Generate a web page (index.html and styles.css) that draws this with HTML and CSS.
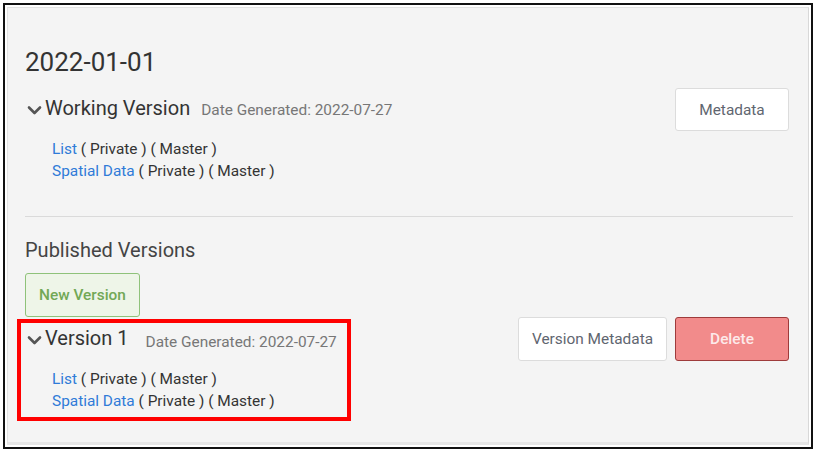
FILE: index.html
```html
<!DOCTYPE html>
<html>
<head>
<meta charset="utf-8">
<link rel="stylesheet" href="styles.css">
</head>
<body>
<div class="frame">
  <div class="panel">
    <h2 class="date-title">2022-01-01</h2>

    <div class="version version-working">
      <div class="version-main">
        <div class="version-head">
          <svg class="chev" width="15" height="10" viewBox="0 0 15 10"><path d="M2 2.5 L7.5 8 L13 2.5" fill="none" stroke="#555" stroke-width="2.6" stroke-linecap="round" stroke-linejoin="round"/></svg>
          <span class="version-name">Working Version</span>
          <span class="gen-date">Date Generated: 2022-07-27</span>
        </div>
        <ul class="files">
          <li><a class="file-link">List</a> ( Private ) ( Master )</li>
          <li><a class="file-link">Spatial Data</a> ( Private ) ( Master )</li>
        </ul>
      </div>
      <div class="actions">
        <button class="btn btn-default">Metadata</button>
      </div>
    </div>

    <hr class="divider">

    <h3 class="section-title">Published Versions</h3>
    <button class="btn btn-new">New Version</button>

    <div class="version version-published">
      <div class="version-main">
        <div class="version-head">
          <svg class="chev" width="15" height="10" viewBox="0 0 15 10"><path d="M2 2.5 L7.5 8 L13 2.5" fill="none" stroke="#555" stroke-width="2.6" stroke-linecap="round" stroke-linejoin="round"/></svg>
          <span class="version-name">Version 1</span>
          <span class="gen-date gen-date-wide">Date Generated: 2022-07-27</span>
        </div>
        <ul class="files">
          <li><a class="file-link">List</a> ( Private ) ( Master )</li>
          <li><a class="file-link">Spatial Data</a> ( Private ) ( Master )</li>
        </ul>
      </div>
      <div class="actions">
        <button class="btn btn-default btn-wide">Version Metadata</button>
        <button class="btn btn-danger">Delete</button>
      </div>
      <div class="highlight"></div>
    </div>
  </div>
</div>
</body>
</html>
```

FILE: styles.css
```css
html, body {
  margin: 0;
  padding: 0;
  background: #ffffff;
}

body {
  font-family: Roboto, "Liberation Sans", Arial, sans-serif;
  color: #333333;
}

.frame {
  margin: 3px 0 0 3px;
  width: 802px;
  height: 438px;
  border: 2px solid #111111;
  padding: 2px;
  box-sizing: content-box;
}

.panel {
  height: 100%;
  box-sizing: border-box;
  background: #f4f4f4;
  border: 1px solid #e3e3e3;
  border-right-color: #d8d8d8;
  border-bottom: 3px solid #e6e6e6;
  padding: 38px 15px 0 17px;
}

.date-title {
  margin: 0;
  font-size: 26px;
  line-height: 32px;
  font-weight: 400;
  color: #333333;
}

.version {
  position: relative;
  display: flex;
  justify-content: space-between;
  align-items: flex-start;
}

.version-working {
  margin-top: 10px;
}

.version-head {
  display: flex;
  align-items: baseline;
  padding-top: 6px;
  line-height: 28px;
}

.version-published .version-head {
  padding-top: 7px;
}

.chev {
  align-self: center;
  margin: 2px 3px 0 2px;
}

.version-name {
  font-size: 20px;
  color: #333333;
}

.gen-date {
  margin-left: 11px;
  font-size: 15.4px;
  color: #777777;
}

.gen-date-wide {
  margin-left: 17px;
  position: relative;
  top: 2px;
}

.files {
  list-style: none;
  margin: 14px 0 0 27px;
  padding: 0;
  font-size: 15.4px;
  line-height: 22px;
  color: #333333;
}

.version-published .files {
  margin-top: 14px;
}

.file-link {
  color: #2f7bd8;
  text-decoration: none;
}

.actions {
  display: flex;
  gap: 8px;
  margin-right: 4px;
}

.btn {
  font-family: Roboto, "Liberation Sans", Arial, sans-serif;
  font-size: 15.4px;
  height: 44px;
  border-radius: 3px;
  padding: 0;
  cursor: pointer;
}

.btn-default {
  width: 114px;
  height: 43px;
  background: #ffffff;
  border: 1px solid #dcdcdc;
  color: #5f6670;
}

.btn-wide {
  width: 149px;
  height: 44px;
}

.btn-danger {
  width: 114px;
  background: #f28b8b;
  border: 1px solid #9e3b3b;
  color: #fdeaea;
  font-weight: 500;
}

.divider {
  margin: 34px 0 0 0;
  border: 0;
  border-top: 1px solid #dadada;
  height: 0;
}

.section-title {
  margin: 19px 0 0 0;
  font-size: 20px;
  line-height: 28px;
  font-weight: 400;
  color: #444444;
}

.btn-new {
  display: block;
  margin-top: 9px;
  width: 115px;
  background: #eef5e8;
  border: 1px solid #8fc27a;
  color: #72a856;
  font-weight: 500;
}

.highlight {
  position: absolute;
  left: -8px;
  top: 2px;
  width: 334px;
  height: 102px;
  box-sizing: border-box;
  border: 4px solid #ff0000;
  pointer-events: none;
}
```
